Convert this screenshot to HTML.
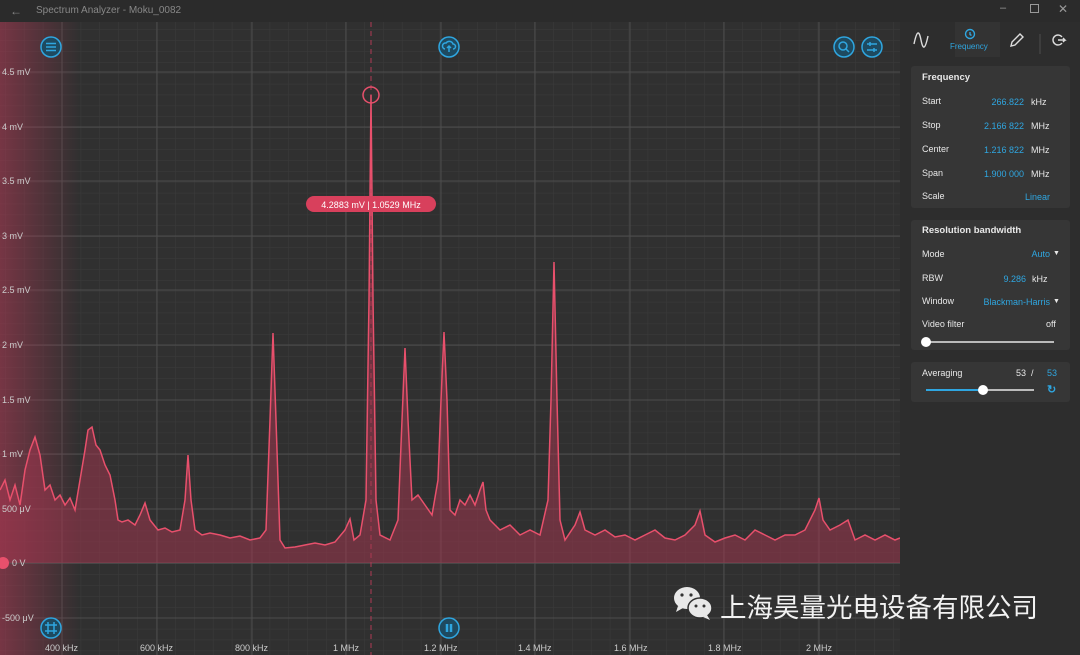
<!DOCTYPE html>
<html><head><meta charset="utf-8"><style>
*{margin:0;padding:0;box-sizing:border-box}
body{width:1080px;height:655px;overflow:hidden;background:#2e2e2e;font-family:"Liberation Sans","Noto Sans CJK SC",sans-serif;position:relative;color:#ddd}
.t{position:absolute;white-space:nowrap}
.panel{position:absolute;left:900px;top:22px;width:180px;height:633px;background:#2d2d2d}
.card{position:absolute;left:911px;width:159px;background:#363636;border-radius:3px}
.lb{position:absolute;font-size:9px;color:#e8e8e8}
.v{position:absolute;font-size:9px;color:#2fa6e0;text-align:right}
.u{position:absolute;font-size:9px;color:#e8e8e8}
.ax{position:absolute;font-size:9px;color:#ccc}
</style></head><body>
<div class="t" style="left:0;top:0;width:1080px;height:22px;background:#2b2b2b"></div>
<div class="t" style="left:10px;top:4px;font-size:12px;color:#888">←</div>
<div class="t" style="left:36px;top:5px;font-size:10px;color:#888">Spectrum Analyzer - Moku_0082</div>
<div class="t" style="left:1000px;top:2px;font-size:11px;color:#999">–</div>
<div class="t" style="left:1030px;top:4px;width:9px;height:9px;border:1px solid #999"></div>
<div class="t" style="left:1058px;top:2px;font-size:12px;color:#999">✕</div>

<svg style="position:absolute;left:0;top:22px" width="900" height="633" viewBox="0 22 900 633">
<defs>
<linearGradient id="lg" x1="0" x2="1" y1="0" y2="0"><stop offset="0" stop-color="#b03a55" stop-opacity=".55"/><stop offset="1" stop-color="#b03a55" stop-opacity="0"/></linearGradient>
<pattern id="mn" width="18.9" height="10.9" patternUnits="userSpaceOnUse" x="5" y="7.5"><path d="M0 0V10.9M0 0H18.9" stroke="#3b3b3b" stroke-width="1" fill="none"/></pattern>
</defs>
<rect x="0" y="22" width="900" height="633" fill="#303030"/>
<rect x="0" y="22" width="900" height="633" fill="url(#mn)"/>
<g stroke="#4d4d4d" stroke-width="1">
<path d="M62 22V655M157 22V655M252 22V655M346 22V655M441 22V655M535 22V655M630 22V655M724 22V655M819 22V655"/>
<path d="M0 72H900M0 127H900M0 181H900M0 236H900M0 290H900M0 345H900M0 400H900M0 454H900M0 509H900M0 618H900"/>
</g>
<rect x="0" y="22" width="80" height="633" fill="url(#lg)"/>
<line x1="0" y1="563" x2="900" y2="563" stroke="#555" stroke-width="1"/>
<line x1="371" y1="22" x2="371" y2="655" stroke="#b03a55" stroke-width="1" stroke-dasharray="5,4"/>
<polygon fill="#a8354f" fill-opacity=".5" points="0,563 0,490 5,480 10,500 15,485 20,505 25,470 30,450 35,437 40,455 45,490 50,485 55,500 60,495 65,505 70,498 75,510 80,480 85,450 88,430 92,427 96,445 100,450 105,465 110,475 115,500 118,520 122,522 128,520 135,525 140,515 145,503 150,520 158,530 165,528 172,532 180,530 185,500 188,455 191,500 195,530 202,535 210,533 220,535 230,538 240,536 250,540 260,538 266,530 270,420 273,333 276,420 280,540 285,548 295,547 305,545 315,543 325,545 335,542 345,530 350,519 354,540 360,535 366,500 369,300 371,95 373,300 376,500 380,535 390,540 398,520 402,420 405,348 408,420 412,500 418,495 425,505 432,515 438,480 441,400 444,332 447,400 450,510 455,515 460,500 465,505 470,495 475,505 480,490 483,482 486,510 490,520 500,530 510,525 520,535 530,530 540,535 548,500 551,400 554,262 557,400 560,520 565,540 575,525 580,512 585,530 595,535 605,530 615,537 625,535 635,540 645,535 655,530 665,538 675,540 685,535 695,525 700,511 705,535 715,542 725,538 735,535 745,540 755,530 765,535 775,540 785,535 795,535 805,530 815,510 819,498 823,520 830,530 840,525 848,520 855,540 865,535 875,540 885,535 895,540 900,538 900,563"/>
<polyline fill="none" stroke="#e8506c" stroke-width="1.5" points="0,490 5,480 10,500 15,485 20,505 25,470 30,450 35,437 40,455 45,490 50,485 55,500 60,495 65,505 70,498 75,510 80,480 85,450 88,430 92,427 96,445 100,450 105,465 110,475 115,500 118,520 122,522 128,520 135,525 140,515 145,503 150,520 158,530 165,528 172,532 180,530 185,500 188,455 191,500 195,530 202,535 210,533 220,535 230,538 240,536 250,540 260,538 266,530 270,420 273,333 276,420 280,540 285,548 295,547 305,545 315,543 325,545 335,542 345,530 350,519 354,540 360,535 366,500 369,300 371,95 373,300 376,500 380,535 390,540 398,520 402,420 405,348 408,420 412,500 418,495 425,505 432,515 438,480 441,400 444,332 447,400 450,510 455,515 460,500 465,505 470,495 475,505 480,490 483,482 486,510 490,520 500,530 510,525 520,535 530,530 540,535 548,500 551,400 554,262 557,400 560,520 565,540 575,525 580,512 585,530 595,535 605,530 615,537 625,535 635,540 645,535 655,530 665,538 675,540 685,535 695,525 700,511 705,535 715,542 725,538 735,535 745,540 755,530 765,535 775,540 785,535 795,535 805,530 815,510 819,498 823,520 830,530 840,525 848,520 855,540 865,535 875,540 885,535 895,540 900,538"/>
<circle cx="371" cy="95" r="8" fill="none" stroke="#e8506c" stroke-width="1.5"/>
<rect x="306" y="196" width="130" height="16" rx="8" fill="#d8405c"/>
<text x="371" y="208" font-size="9" fill="#fff" text-anchor="middle" font-family="Liberation Sans">4.2883 mV | 1.0529 MHz</text>
<circle cx="3" cy="563" r="6" fill="#e8506c"/>
<g fill="none" stroke="#2fa6e0" stroke-width="1.5">
<circle cx="51" cy="47" r="10" fill="#1e4a60"/><path d="M46 43.5h10M46 47h10M46 50.5h10"/>
<circle cx="449" cy="47" r="10" fill="#1e4a60"/><path d="M445 49a3 3 0 0 1 1-6 4 4 0 0 1 7 1 2.5 2.5 0 0 1 0 5M449 46v6M447 48l2-2 2 2"/>
<circle cx="844" cy="47" r="10" fill="#1e4a60"/><circle cx="843" cy="46" r="4"/><path d="M846 49l3 3"/>
<circle cx="872" cy="47" r="10" fill="#1e4a60"/><path d="M867 44h10M867 50h10M870 42v4M874 48v4"/>
<circle cx="51" cy="628" r="10" fill="#1e4a60"/><path d="M45 625h12M45 631h12M48 622v12M54 622v12"/>
<circle cx="449" cy="628" r="10" fill="#1e4a60"/><path d="M447 624v8M451 624v8" stroke-width="2.5"/>
</g>
</svg>

<div class="ax" style="left:2px;top:67px">4.5 mV</div>
<div class="ax" style="left:2px;top:122px">4 mV</div>
<div class="ax" style="left:2px;top:176px">3.5 mV</div>
<div class="ax" style="left:2px;top:231px">3 mV</div>
<div class="ax" style="left:2px;top:285px">2.5 mV</div>
<div class="ax" style="left:2px;top:340px">2 mV</div>
<div class="ax" style="left:2px;top:395px">1.5 mV</div>
<div class="ax" style="left:2px;top:449px">1 mV</div>
<div class="ax" style="left:2px;top:504px">500 μV</div>
<div class="ax" style="left:12px;top:558px">0 V</div>
<div class="ax" style="left:2px;top:613px">-500 μV</div>
<div class="ax" style="left:45px;top:643px">400 kHz</div>
<div class="ax" style="left:140px;top:643px">600 kHz</div>
<div class="ax" style="left:235px;top:643px">800 kHz</div>
<div class="ax" style="left:333px;top:643px">1 MHz</div>
<div class="ax" style="left:424px;top:643px">1.2 MHz</div>
<div class="ax" style="left:518px;top:643px">1.4 MHz</div>
<div class="ax" style="left:614px;top:643px">1.6 MHz</div>
<div class="ax" style="left:708px;top:643px">1.8 MHz</div>
<div class="ax" style="left:806px;top:643px">2 MHz</div>

<div class="panel"></div>
<div class="t" style="left:955px;top:22px;width:45px;height:35px;background:#333"></div>
<svg style="position:absolute;left:910px;top:28px" width="160" height="26" viewBox="0 0 160 26" fill="none" stroke="#ddd" stroke-width="1.4">
<path d="M4 16c3-14 5-14 7-4s4 10 7-4"/>
<circle cx="60" cy="6" r="4.5" stroke="#2fa6e0"/><path d="M60 4v2.5l1.5 1" stroke="#2fa6e0"/>
<path d="M102 14l8-8 3 3-8 8-4 1z"/>
<path d="M130 6v20" stroke="#444"/>
<path d="M152 9a5 5 0 1 0 0 6M148 12h7l-2-2M155 12l-2 2"/>
</svg>
<div class="t" style="left:950px;top:42px;font-size:8px;color:#2fa6e0">Frequency</div>

<div class="card" style="top:66px;height:142px"></div>
<div class="lb" style="left:922px;top:72px;font-weight:bold;font-size:9.5px">Frequency</div>
<div class="lb" style="left:922px;top:96px">Start</div><div class="v" style="left:960px;width:64px;top:97px">266.822</div><div class="u" style="left:1031px;top:97px">kHz</div>
<div class="lb" style="left:922px;top:120px">Stop</div><div class="v" style="left:960px;width:64px;top:121px">2.166 822</div><div class="u" style="left:1031px;top:121px">MHz</div>
<div class="lb" style="left:922px;top:144px">Center</div><div class="v" style="left:960px;width:64px;top:145px">1.216 822</div><div class="u" style="left:1031px;top:145px">MHz</div>
<div class="lb" style="left:922px;top:168px">Span</div><div class="v" style="left:960px;width:64px;top:169px">1.900 000</div><div class="u" style="left:1031px;top:169px">MHz</div>
<div class="lb" style="left:922px;top:191px">Scale</div><div class="v" style="left:990px;width:60px;top:192px">Linear</div>

<div class="card" style="top:220px;height:130px"></div>
<div class="lb" style="left:922px;top:225px;font-weight:bold;font-size:9.5px">Resolution bandwidth</div>
<div class="lb" style="left:922px;top:249px">Mode</div><div class="v" style="left:990px;width:60px;top:249px">Auto</div><div class="u" style="left:1053px;top:250px;font-size:7px">▼</div>
<div class="lb" style="left:922px;top:273px">RBW</div><div class="v" style="left:960px;width:66px;top:274px">9.286</div><div class="u" style="left:1032px;top:274px">kHz</div>
<div class="lb" style="left:922px;top:296px">Window</div><div class="v" style="left:960px;width:90px;top:297px">Blackman-Harris</div><div class="u" style="left:1053px;top:298px;font-size:7px">▼</div>
<div class="lb" style="left:922px;top:319px">Video filter</div><div class="u" style="left:1046px;top:319px">off</div>
<div class="t" style="left:926px;top:341px;width:128px;height:2px;background:#bbb"></div>
<div class="t" style="left:921px;top:337px;width:10px;height:10px;border-radius:5px;background:#fff"></div>

<div class="card" style="top:362px;height:40px"></div>
<div class="lb" style="left:922px;top:368px">Averaging</div>
<div class="u" style="left:1016px;top:368px">53 &nbsp;/</div><div class="v" style="left:1040px;width:17px;top:368px">53</div>
<div class="t" style="left:926px;top:389px;width:57px;height:2px;background:#2fa6e0"></div>
<div class="t" style="left:983px;top:389px;width:51px;height:2px;background:#bbb"></div>
<div class="t" style="left:978px;top:385px;width:10px;height:10px;border-radius:5px;background:#fff"></div>
<div class="t" style="left:1047px;top:383px;font-size:11px;color:#2fa6e0;font-weight:bold">↻</div>

<svg style="position:absolute;left:672px;top:584px" width="44" height="40" viewBox="0 0 44 40">
<ellipse cx="15" cy="14" rx="13" ry="11" fill="#e8e8e8"/><path d="M6 22l-2 6 7-4z" fill="#e8e8e8"/>
<ellipse cx="28" cy="24" rx="12" ry="10" fill="#e8e8e8" stroke="#303030" stroke-width="1.5"/><path d="M35 31l3 5-7-3z" fill="#e8e8e8"/>
<circle cx="10" cy="11" r="1.6" fill="#333"/><circle cx="19" cy="11" r="1.6" fill="#333"/>
<circle cx="24" cy="22" r="1.5" fill="#333"/><circle cx="32" cy="22" r="1.5" fill="#333"/>
</svg>
<div class="t" style="left:720px;top:588px;font-size:26.5px;color:#f2f2f2;font-family:'Noto Sans CJK SC',sans-serif;line-height:36px">上海昊量光电设备有限公司</div>
</body></html>
